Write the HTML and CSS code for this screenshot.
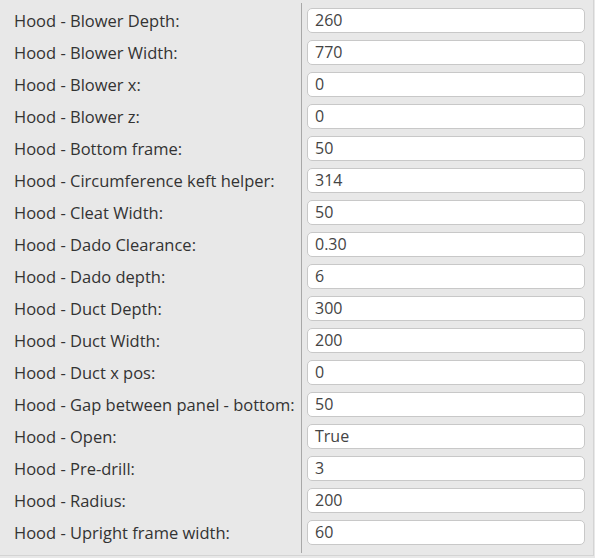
FILE: index.html
```html
<!DOCTYPE html>
<html>
<head>
<meta charset="utf-8">
<link rel="stylesheet" href="styles.css">
</head>
<body>
<div class="form">
  <div class="labels">
    <div class="label">Hood - Blower Depth:</div>
    <div class="label">Hood - Blower Width:</div>
    <div class="label">Hood - Blower x:</div>
    <div class="label">Hood - Blower z:</div>
    <div class="label">Hood - Bottom frame:</div>
    <div class="label">Hood - Circumference keft helper:</div>
    <div class="label">Hood - Cleat Width:</div>
    <div class="label">Hood - Dado Clearance:</div>
    <div class="label">Hood - Dado depth:</div>
    <div class="label">Hood - Duct Depth:</div>
    <div class="label">Hood - Duct Width:</div>
    <div class="label">Hood - Duct x pos:</div>
    <div class="label">Hood - Gap between panel - bottom:</div>
    <div class="label">Hood - Open:</div>
    <div class="label">Hood - Pre-drill:</div>
    <div class="label">Hood - Radius:</div>
    <div class="label">Hood - Upright frame width:</div>
  </div>
  <div class="fields">
    <div class="field">260</div>
    <div class="field">770</div>
    <div class="field">0</div>
    <div class="field">0</div>
    <div class="field">50</div>
    <div class="field">314</div>
    <div class="field">50</div>
    <div class="field">0.30</div>
    <div class="field">6</div>
    <div class="field">300</div>
    <div class="field">200</div>
    <div class="field">0</div>
    <div class="field">50</div>
    <div class="field">True</div>
    <div class="field">3</div>
    <div class="field">200</div>
    <div class="field">60</div>
  </div>
</div>
</body>
</html>
```
FILE: styles.css
```css
html, body {
  margin: 0;
  padding: 0;
  background: #e8e8e8;
}
body {
  font-family: "Open Sans", "Noto Sans", sans-serif;
  font-size: 16.5px;
  color: #333;
}
.form {
  display: flex;
  width: 593px;
  height: 555px;
  border-right: 1px solid #d4d4d4;
  border-bottom: 1px solid #d4d4d4;
  box-sizing: content-box;
}
.labels {
  width: 302px;
  flex: none;
  margin: 3px 0 2px;
  padding-top: 5px;
  border-right: 1px solid #a8a8a8;
  box-sizing: border-box;
  height: 550px;
}
.label {
  height: 25px;
  line-height: 25px;
  margin-bottom: 7px;
  padding-left: 14px;
  white-space: nowrap;
}
.fields {
  flex: 1;
  padding: 8px 0 0 5px;
}
.field {
  width: 278px;
  height: 25px;
  box-sizing: border-box;
  border: 1px solid #c8c8c8;
  border-radius: 5px;
  background: #fff;
  margin-bottom: 7px;
  padding-left: 7px;
  line-height: 23px;
  font-size: 16px;
  color: #444;
}
```
